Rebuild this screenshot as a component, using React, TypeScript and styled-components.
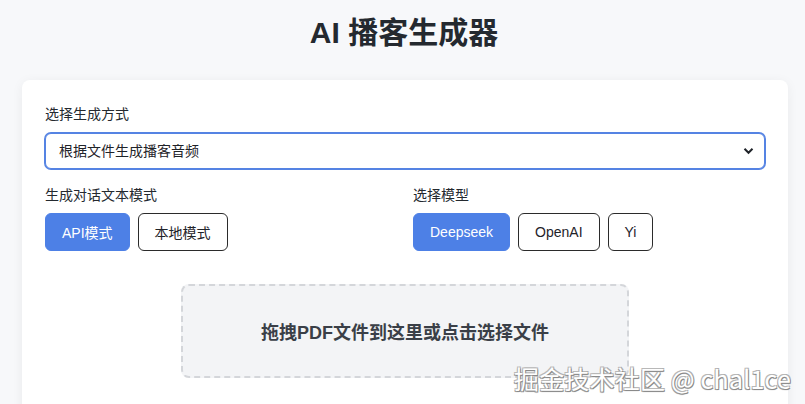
import React, { useState } from "react";
import styled, { createGlobalStyle } from "styled-components";

const GlobalStyle = createGlobalStyle`
  html, body {
    margin: 0;
    padding: 0;
    background: #f7f8fa;
    font-family: "Liberation Sans", "Noto Sans CJK SC", sans-serif;
    color: #1f2329;
    overflow: hidden;
  }
  * { box-sizing: border-box; }
`;

const Page = styled.div`
  position: relative;
  width: 805px;
  height: 404px;
  overflow: hidden;
  padding: 13px 17px 0 22px;
`;

const Title = styled.h1`
  margin: 0;
  height: 39px;
  font-size: 30px;
  line-height: 39px;
  font-weight: 700;
  text-align: center;
  color: #24292f;
  font-family: "Liberation Sans", "Noto Sans CJK SC", sans-serif;
  padding-right: 2px;
`;

const Card = styled.div`
  margin-top: 28px;
  width: 766px;
  height: 340px;
  background: #ffffff;
  border-radius: 8px;
  box-shadow: 0 2px 12px rgba(0, 0, 0, 0.06);
  padding: 24px 23px 0 23px;
`;

const Label = styled.div`
  font-size: 14px;
  line-height: 20px;
  color: #24292f;
  margin-bottom: 8px;
`;

const SelectWrap = styled.div`
  position: relative;
  width: 720px;
  height: 36px;
  margin-top: 9px;
`;

const Select = styled.select`
  appearance: none;
  width: 100%;
  height: 36px;
  border: 1px solid #5583e3;
  box-shadow: 0 0 0 1px #5583e3;
  border-radius: 6px;
  background: #fff;
  padding: 0 30px 0 13px;
  font-size: 14px;
  font-family: "Liberation Sans", "Noto Sans CJK SC", sans-serif;
  color: #1f2329;
  outline: none;
`;

const Chevron = styled.svg`
  position: absolute;
  right: 11px;
  top: 14px;
  pointer-events: none;
`;

const Columns = styled.div`
  display: grid;
  grid-template-columns: 352px 352px;
  column-gap: 16px;
  margin-top: 16px;
`;

const Group = styled.div`
  display: flex;
  flex-direction: column;
`;

const ButtonRow = styled.div`
  display: flex;
  gap: 8px;
`;

const ModeButton = styled.button<{ $active?: boolean }>`
  height: 38px;
  padding: 0 16px;
  border-radius: 6px;
  border: 1px solid ${(p) => (p.$active ? "#4d80e6" : "#2b2b2b")};
  background: ${(p) => (p.$active ? "#4d80e6" : "#ffffff")};
  color: ${(p) => (p.$active ? "#ffffff" : "#1f2329")};
  font-size: 14px;
  font-family: "Liberation Sans", "Noto Sans CJK SC", sans-serif;
  cursor: pointer;
`;

const DropZone = styled.div`
  margin: 33px auto 0;
  width: 448px;
  height: 94px;
  border: 2px dashed #d4d6da;
  border-radius: 8px;
  background: #f3f4f6;
  display: flex;
  align-items: center;
  justify-content: center;
  font-size: 18px;
  font-weight: 700;
  color: #3a3f47;
`;

const Watermark = styled.div`
  position: absolute;
  right: 14px;
  bottom: 11px;
  font-size: 25px;
  line-height: 30px;
  color: #ffffff;
  font-family: "Noto Sans CJK SC", sans-serif;
  letter-spacing: 0.2px;
  text-shadow: 1px 1px 0 #8a8a8a, -1px -1px 0 #b8b8b8, 1px -1px 0 #b0b0b0,
    -1px 1px 0 #a0a0a0, 0 1px 1px #888;
`;

export default function App() {
  const [mode, setMode] = useState("api");
  const [model, setModel] = useState("deepseek");
  return (
    <>
      <GlobalStyle />
      <Page>
        <Title>AI 播客生成器</Title>
        <Card>
          <Label>选择生成方式</Label>
          <SelectWrap>
            <Select defaultValue="file">
              <option value="file">根据文件生成播客音频</option>
            </Select>
            <Chevron width="11" height="8" viewBox="0 0 11 8">
              <path d="M1.5 1.8 L5.5 5.8 L9.5 1.8" fill="none" stroke="#1f2329" strokeWidth="2" />
            </Chevron>
          </SelectWrap>
          <Columns>
            <Group>
              <Label>生成对话文本模式</Label>
              <ButtonRow>
                <ModeButton $active={mode === "api"} onClick={() => setMode("api")}>API模式</ModeButton>
                <ModeButton $active={mode === "local"} onClick={() => setMode("local")}>本地模式</ModeButton>
              </ButtonRow>
            </Group>
            <Group>
              <Label>选择模型</Label>
              <ButtonRow>
                <ModeButton $active={model === "deepseek"} onClick={() => setModel("deepseek")}>Deepseek</ModeButton>
                <ModeButton $active={model === "openai"} onClick={() => setModel("openai")}>OpenAI</ModeButton>
                <ModeButton $active={model === "yi"} onClick={() => setModel("yi")}>Yi</ModeButton>
              </ButtonRow>
            </Group>
          </Columns>
          <DropZone>拖拽PDF文件到这里或点击选择文件</DropZone>
        </Card>
        <Watermark>掘金技术社区 @ chal1ce</Watermark>
      </Page>
    </>
  );
}
